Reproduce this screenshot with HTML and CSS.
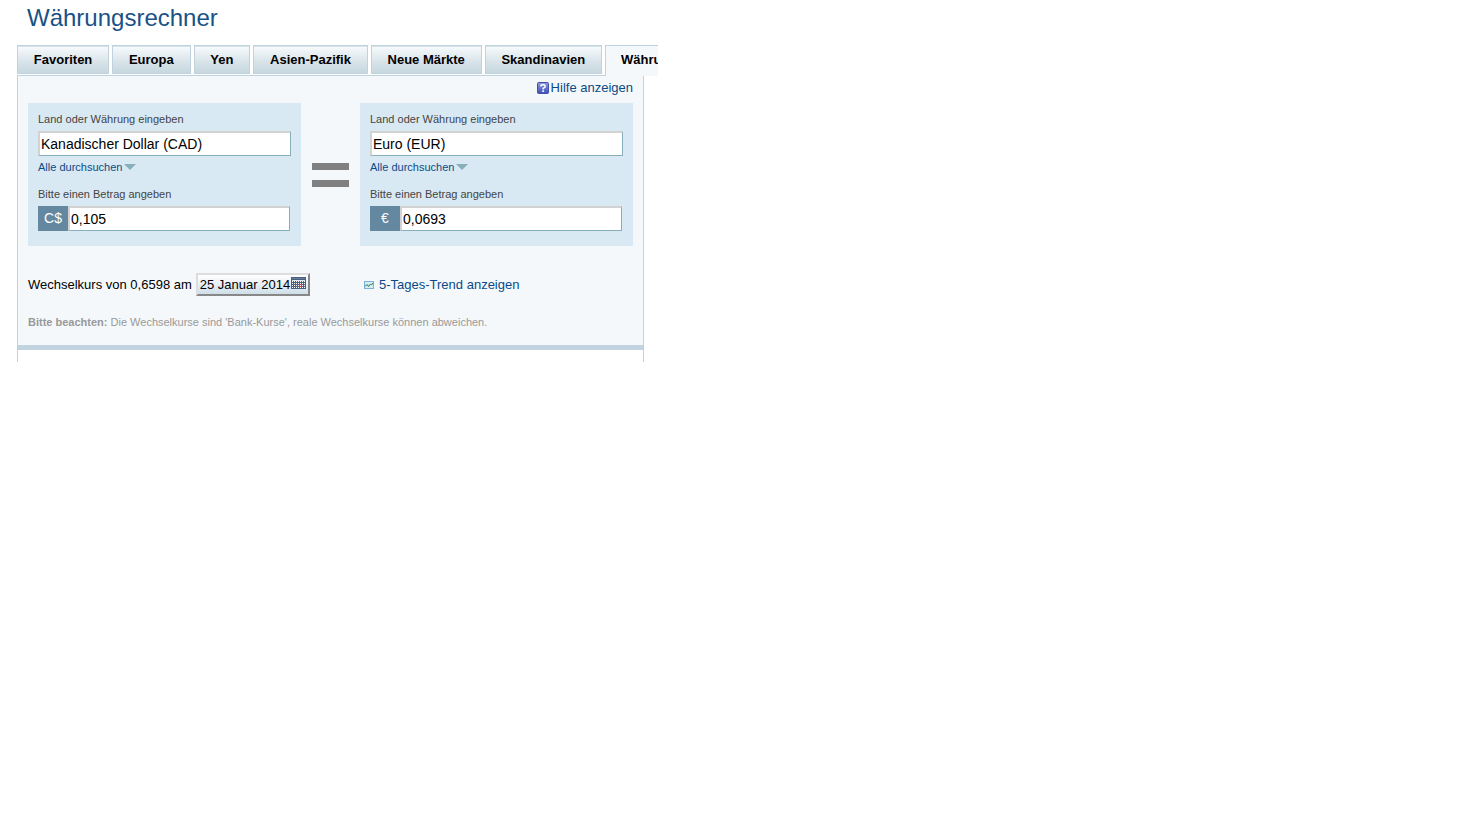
FILE: index.html
```html
<!DOCTYPE html>
<html lang="de">
<head>
    <meta charset="UTF-8">
    <meta name="viewport" content="width=device-width, initial-scale=1.0">
    <title>Währungsrechner</title>
    <link rel="stylesheet" href="styles.css">
</head>
<body>
    <div class="converter">
        <h1>Währungsrechner</h1>

        <nav class="tabs">
            <a class="tab" href="#favoriten">Favoriten</a>
            <a class="tab" href="#europa">Europa</a>
            <a class="tab" href="#yen">Yen</a>
            <a class="tab" href="#asien">Asien-Pazifik</a>
            <a class="tab" href="#maerkte">Neue Märkte</a>
            <a class="tab" href="#skandinavien">Skandinavien</a>
            <a class="tab active" href="#rechner">Währu</a>
        </nav>

        <div class="panel">
            <div class="content">
                <a class="help" href="#hilfe">
                    <svg width="12" height="12" viewBox="0 0 12 12">
                        <defs>
                            <linearGradient id="helpFill" x1="0" y1="0" x2="0" y2="1">
                                <stop offset="0" stop-color="#8f9ade"/>
                                <stop offset="1" stop-color="#3f50b4"/>
                            </linearGradient>
                        </defs>
                        <rect x="0.5" y="0.5" width="11" height="11" rx="1" fill="url(#helpFill)" stroke="#4350ae"/>
                        <path d="M4 4.5V3.5L5 2.8H7L8 3.6V5L6.2 6.3V7.5" fill="none" stroke="#fff" stroke-width="1.5"/>
                        <rect x="5.3" y="8.4" width="1.8" height="1.6" fill="#fff"/>
                    </svg>
                    <span>Hilfe anzeigen</span>
                </a>

                <div class="currencies">
                    <div class="currency">
                        <label for="fromCurrency">Land oder Währung eingeben</label>
                        <input type="text" id="fromCurrency" value="Kanadischer Dollar (CAD)">
                        <a class="browse" href="#alle">Alle durchsuchen<svg width="12" height="6" viewBox="0 0 12 6"><path d="M0 0H12L6 6Z" fill="#86afba"/></svg></a>
                        <label for="fromAmount">Bitte einen Betrag angeben</label>
                        <div class="amount">
                            <span class="symbol">C$</span>
                            <input type="text" id="fromAmount" value="0,105">
                        </div>
                    </div>

                    <div class="equals"></div>

                    <div class="currency">
                        <label for="toCurrency">Land oder Währung eingeben</label>
                        <input type="text" id="toCurrency" value="Euro (EUR)">
                        <a class="browse" href="#alle">Alle durchsuchen<svg width="12" height="6" viewBox="0 0 12 6"><path d="M0 0H12L6 6Z" fill="#86afba"/></svg></a>
                        <label for="toAmount">Bitte einen Betrag angeben</label>
                        <div class="amount">
                            <span class="symbol">€</span>
                            <input type="text" id="toAmount" value="0,0693">
                        </div>
                    </div>
                </div>

                <div class="details">
                    <div class="rate">
                        <span>Wechselkurs von 0,6598 am</span>
                        <button type="button" class="date">
                            <span>25 Januar 2014</span>
                            <svg width="15" height="12" viewBox="0 0 15 12" shape-rendering="crispEdges">
                                <rect width="15" height="12" fill="#49617f"/>
                                <rect x="1" y="1" width="13" height="1" fill="#63799a"/>
                                <path d="M1 4.5H14M1 6.5H14M1 8.5H14M1 10.5H14" stroke="#fff" stroke-dasharray="1 1"/>
                                <path d="M1 3.5H14" stroke="#dfe6ee"/>
                                <rect x="8" y="7" width="3" height="3" fill="#e8333a"/>
                                <rect x="9" y="8" width="1" height="1" fill="#fff"/>
                            </svg>
                        </button>
                    </div>
                    <a class="trend" href="#trend">
                        <svg width="10" height="8" viewBox="0 0 10 8">
                            <rect x="0.5" y="0.5" width="9" height="7" fill="#d3ecf5" stroke="#7db0d8"/>
                            <path d="M1 5.5L3 3.5L4.5 5.5L6.5 3L7.5 4L9 2" fill="none" stroke="#2c8043"/>
                        </svg>
                        <span>5-Tages-Trend anzeigen</span>
                    </a>
                </div>

                <p class="note"><b>Bitte beachten:</b> Die Wechselkurse sind 'Bank-Kurse', reale Wechselkurse können abweichen.</p>
            </div>
        </div>
    </div>
</body>
</html>
```

FILE: styles.css
```css
* {
    box-sizing: border-box;
}
body {
    margin: 0;
    background: #fff;
    color: #000;
    font-family: "Liberation Sans", Arial, sans-serif;
    font-size: 13px;
}
a {
    color: #0b4a86;
    text-decoration: none;
}
.converter {
    max-width: 641px;
    margin-left: 17px;
}
h1 {
    margin: 0;
    padding: 0 10px 9px;
    color: #1a5286;
    font-size: 24px;
    font-weight: normal;
    line-height: 36px;
}

/* tabs */
.tabs {
    display: flex;
    gap: 3px;
    height: 31px;
}
.tab {
    flex: 1 0 auto;
    height: 29px;
    padding: 0 14px;
    border: 1px solid #bfd2dd;
    background: linear-gradient(#f8fbfc, #d7e3e9 60%, #c7d8df);
    box-shadow: inset 0 1px #d5e2ea;
    color: #000;
    font-weight: bold;
    line-height: 27px;
    text-align: center;
}
.tab.active {
    position: relative;
    flex: 0 0 53px;
    height: 31px;
    padding: 0 0 0 15px;
    border-width: 1px 0 0 1px;
    background: #f4f8fb;
    box-shadow: none;
    text-align: left;
    overflow: hidden;
}

.panel {
    margin: -1px 14px 0 0;
    padding-bottom: 12px;
    border: 1px solid #bfd2dd;
    border-bottom: none;
}
.content {
    padding: 4px 10px 17px;
    border-bottom: 5px solid #c0d3df;
    background: #f4f8fb;
}
.help {
    display: flex;
    justify-content: flex-end;
    align-items: center;
    gap: 2px;
    margin-bottom: 7px;
    line-height: 16px;
}
.currencies,
.details {
    display: grid;
    grid-template-columns: 1fr 59px 1fr;
    align-items: center;
}
.currency {
    display: flex;
    flex-direction: column;
    padding: 10px 10px 15px;
    background: #d9e9f3;
}
label {
    margin-bottom: 6px;
    color: #444;
    font-size: 11px;
    line-height: 12px;
}
input {
    width: 100%;
    height: 25px;
    padding: 0 1px;
    border: 1px solid #86afba;
    border-top: 2px solid #d2d2d2;
    border-left: 2px solid #d2d2d2;
    background: #fff;
    color: #000;
    font-family: inherit;
    font-size: 14px;
}
.browse {
    display: flex;
    align-items: center;
    gap: 2px;
    margin: 5px 0 15px;
    font-size: 11px;
    line-height: 12px;
}
.amount {
    display: flex;
    padding-right: 1px;
}
.symbol {
    flex: 0 0 30px;
    background: #64889f;
    color: #fff;
    font-size: 14px;
    line-height: 25px;
    text-align: center;
}
.equals {
    justify-self: center;
    width: 37px;
    height: 24px;
    border: solid #808080;
    border-width: 7px 0;
}

/* rate and trend */
.details {
    margin-top: 27px;
}
.rate {
    grid-column: 1 / 3;
    display: flex;
    align-items: center;
    gap: 4px;
}
.date {
    display: flex;
    align-items: center;
    gap: 1px;
    height: 23px;
    padding: 0 2px;
    border: 2px solid;
    border-color: #ddd #888 #888 #ddd;
    background: linear-gradient(#fff, #cfdfe8);
    color: #000;
    font-family: inherit;
    font-size: 13px;
}
.date svg {
    margin-bottom: 3px;
}
.trend {
    display: flex;
    align-items: center;
    gap: 5px;
    padding-left: 4px;
}
.note {
    margin: 20px 0 0;
    color: #999;
    font-size: 11px;
    line-height: 12px;
}
```
